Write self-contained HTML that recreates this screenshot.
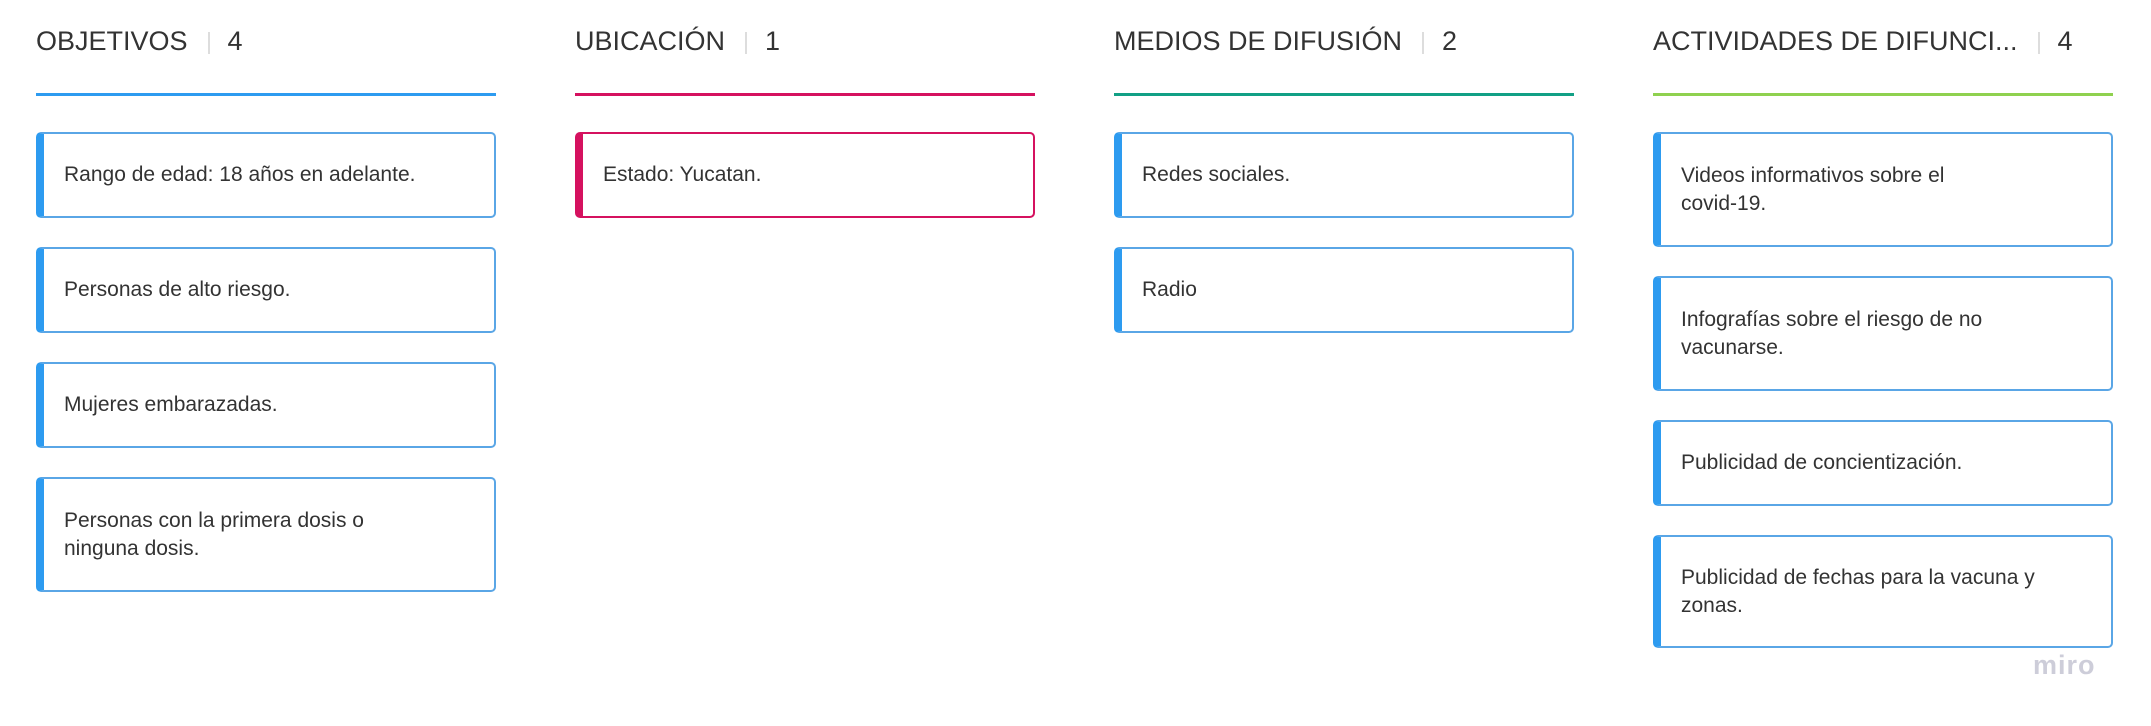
<!DOCTYPE html>
<html><head><meta charset="utf-8"><style>
body{margin:0;width:2151px;height:726px;background:#fff;font-family:"Liberation Sans",sans-serif;position:relative;overflow:hidden;color:#333}
.h{position:absolute;top:24px;font-size:27px;color:#333;white-space:nowrap;height:34px;line-height:34px}
.h .sep{display:inline-block;width:2px;height:22px;background:#ddd;vertical-align:middle;margin:0 18px 0 20px}
.ln{position:absolute;top:93px;height:3px;width:460px}
.c{position:absolute;width:460px;box-sizing:border-box;border:2px solid #5aa6e6;border-left:8px solid #2d9bf0;border-radius:5px;display:flex;align-items:center;padding:0 24px 0 20px;font-size:21px;line-height:28px;color:#333}
.m{border-color:#d5115f}
.miro{position:absolute;left:2033px;top:650px;font-size:27px;font-weight:bold;color:#cdcdd9;letter-spacing:1px}
</style></head><body>
<div class="h" style="left:36px">OBJETIVOS<span class="sep"></span>4</div>
<div class="h" style="left:575px">UBICACIÓN<span class="sep"></span>1</div>
<div class="h" style="left:1114px">MEDIOS DE DIFUSIÓN<span class="sep"></span>2</div>
<div class="h" style="left:1653px">ACTIVIDADES DE DIFUNCI...<span class="sep"></span>4</div>
<div class="ln" style="left:36px;background:#2d9bf0"></div>
<div class="ln" style="left:575px;background:#d5115f"></div>
<div class="ln" style="left:1114px;background:#12a085"></div>
<div class="ln" style="left:1653px;background:#8fd14f"></div>

<div class="c" style="left:36px;top:132px;height:86px">Rango de edad: 18 años en adelante.</div>
<div class="c" style="left:36px;top:247px;height:86px">Personas de alto riesgo.</div>
<div class="c" style="left:36px;top:362px;height:86px">Mujeres embarazadas.</div>
<div class="c" style="left:36px;top:477px;height:115px"><span>Personas con la primera dosis o<br>ninguna dosis.</span></div>

<div class="c m" style="left:575px;top:132px;height:86px">Estado: Yucatan.</div>

<div class="c" style="left:1114px;top:132px;height:86px">Redes sociales.</div>
<div class="c" style="left:1114px;top:247px;height:86px">Radio</div>

<div class="c" style="left:1653px;top:132px;height:115px"><span>Videos informativos sobre el<br>covid-19.</span></div>
<div class="c" style="left:1653px;top:276px;height:115px"><span>Infografías sobre el riesgo de no<br>vacunarse.</span></div>
<div class="c" style="left:1653px;top:420px;height:86px">Publicidad de concientización.</div>
<div class="c" style="left:1653px;top:535px;height:113px"><span>Publicidad de fechas para la vacuna y<br>zonas.</span></div>
<div class="miro">miro</div>
</body></html>
